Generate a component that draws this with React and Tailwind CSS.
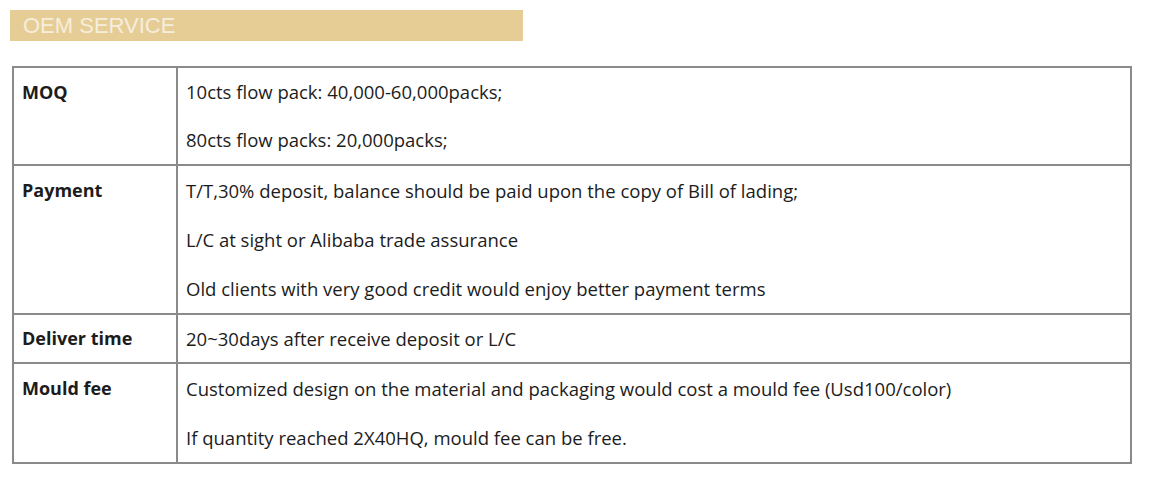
import React from 'react';

const rows = [
  {
    label: 'MOQ',
    lineH: 'h-[48px] leading-[48px]',
    lines: ['10cts flow pack: 40,000-60,000packs;', '80cts flow packs: 20,000packs;'],
  },
  {
    label: 'Payment',
    lineH: 'h-[49px] leading-[49px]',
    lines: [
      'T/T,30% deposit, balance should be paid upon the copy of Bill of lading;',
      'L/C at sight or Alibaba trade assurance',
      'Old clients with very good credit would enjoy better payment terms',
    ],
  },
  {
    label: 'Deliver time',
    lineH: 'h-[47px] leading-[47px]',
    lines: ['20~30days after receive deposit or L/C'],
  },
  {
    label: 'Mould fee',
    lineH: 'h-[49px] leading-[49px]',
    lines: [
      'Customized design on the material and packaging would cost a mould fee (Usd100/color)',
      'If quantity reached 2X40HQ, mould fee can be free.',
    ],
  },
];

export default function App() {
  return (
    <div className="w-[1152px] h-[477px] bg-white overflow-hidden">
      <div className="pt-[10px] pl-[10px]">
        <div className="w-[513px] h-[31px] bg-[#e6cd96] flex items-center pl-[13px]">
          <span className="font-['Liberation_Sans',Arial,sans-serif] text-[22px] leading-none text-[#f6eedd]">
            OEM SERVICE
          </span>
        </div>
      </div>

      <div className="ml-[12px] mt-[25px] w-[1120px] border-2 border-[#8a8a8a] font-['Open_Sans',sans-serif] text-[18.5px] text-[#1c1c1c]">
        {rows.map((row, i) => (
          <div key={row.label} className={`flex ${i > 0 ? 'border-t-2 border-[#8a8a8a]' : ''}`}>
            <div className="w-[164px] shrink-0 border-r-2 border-[#8a8a8a] pl-[8px] text-[18px] font-bold">
              <div className={row.lineH}>{row.label}</div>
            </div>
            <div className="pl-[8px]">
              {row.lines.map((line) => (
                <div key={line} className={row.lineH}>
                  {line}
                </div>
              ))}
            </div>
          </div>
        ))}
      </div>
    </div>
  );
}
